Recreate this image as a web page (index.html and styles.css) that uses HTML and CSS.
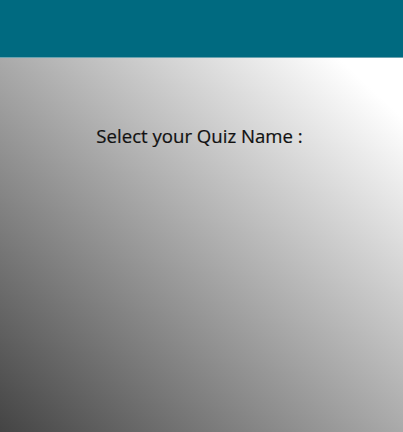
FILE: index.html
```html
<!DOCTYPE html>
<html>
<head>
<meta charset="utf-8">
<link rel="stylesheet" href="styles.css">
</head>
<body>
<header class="topbar"></header>
<main class="content">
  <h1 class="title">Select your Quiz Name :</h1>
</main>
</body>
</html>
```
FILE: styles.css
```css
html, body {
  margin: 0;
  padding: 0;
  height: 100%;
}
body {
  display: flex;
  flex-direction: column;
  font-family: "Open Sans", "Noto Sans", sans-serif;
}
.topbar {
  height: 57px;
  background: #006a80;
  border-bottom: 1px solid #6aa3b0;
  flex: none;
}
.content {
  flex: 1;
  background: linear-gradient(to top right, #444444 0%, #ffffff 92%, #ffffff 100%);
  display: flex;
  flex-direction: column;
  align-items: center;
  padding-right: 4px;
}
.title {
  margin: 65px 0 0 0;
  font-size: 18.6px;
  font-weight: 400;
  color: #111;
  line-height: 26px;
  -webkit-text-stroke: 0.2px #111;
}
```
